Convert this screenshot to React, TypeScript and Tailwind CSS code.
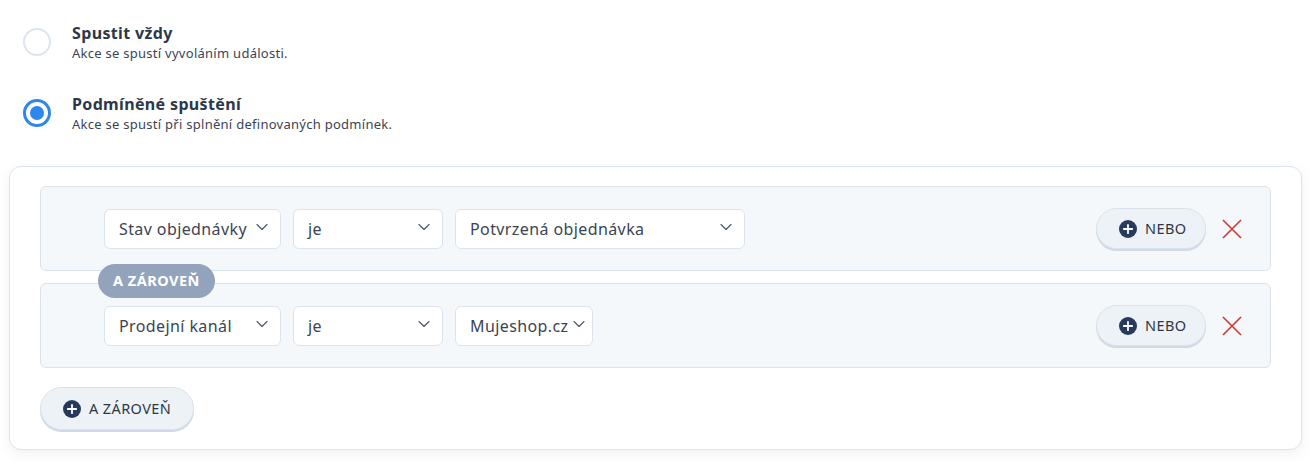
import {ChevronDown} from "lucide-react";

function PlusCircle() {
  return (
    <svg width="18" height="18" viewBox="0 0 18 18" className="shrink-0">
      <circle cx="9" cy="9" r="9" fill="#273a5b" />
      <path d="M9 4.8v8.4M4.8 9h8.4" stroke="#fff" strokeWidth="1.8" strokeLinecap="round" />
    </svg>
  );
}

function CloseIcon() {
  return (
    <svg width="20" height="20" viewBox="0 0 20 20" className="shrink-0">
      <path d="M1 1l18 18M19 1L1 19" stroke="#d2372f" strokeWidth="1.6" />
    </svg>
  );
}

function Select({label, width}: {label: string; width: string}) {
  return (
    <div className={`${width} h-10 flex items-center justify-between bg-white border border-[#dbe3ec] rounded-md pl-[14px] pr-[8px] text-[16px] tracking-[0.4px] text-[#3b4455]`}>
      <span className="whitespace-nowrap">{label}</span>
      <ChevronDown className="w-5 h-5 -mt-1 text-[#4a5568] shrink-0" strokeWidth={1.3} />
    </div>
  );
}

function PillButton({label, className}: {label: string; className: string}) {
  return (
    <button className={`flex items-center gap-2 rounded-full bg-[#edf2f7] border border-[#dae3ec] shadow-[0_2px_0_#cfdae6] text-[14.5px] tracking-[0.4px] text-[#2d3748] ${className}`}>
      <PlusCircle />
      <span>{label}</span>
    </button>
  );
}

function Row({fields}: {fields: {label: string; width: string}[]}) {
  return (
    <div className="h-[85px] bg-[#f5f8fb] border border-[#d9e3ec] rounded-md flex items-center pl-[63px] pr-[28px]">
      <div className="flex gap-3 items-center">
        {fields.map((f) => (
          <Select key={f.label + f.width} label={f.label} width={f.width} />
        ))}
      </div>
      <div className="ml-auto flex items-center gap-4">
        <PillButton label="NEBO" className="w-[110px] h-[41px] pl-[22px]" />
        <CloseIcon />
      </div>
    </div>
  );
}

function Radio({checked, title, desc}: {checked: boolean; title: string; desc: string}) {
  return (
    <div className="flex items-center gap-[21px]">
      {checked ? (
        <div className="w-7 h-7 rounded-full border-[3px] border-[#2f86eb] flex items-center justify-center">
          <div className="w-[14px] h-[14px] rounded-full bg-[#2f86eb]" />
        </div>
      ) : (
        <div className="w-7 h-7 rounded-full border-2 border-[#dde5ee] bg-white" />
      )}
      <div className="flex flex-col">
        <span className="text-[16px] tracking-[0.35px] font-bold text-[#2d3748] leading-[22px]">{title}</span>
        <span className="text-[13px] tracking-[0.27px] text-[#3b4455] leading-[18px]">{desc}</span>
      </div>
    </div>
  );
}

export default function App() {
  return (
    <div className="w-[1310px] h-[475px] bg-white overflow-hidden" style={{fontFamily: '"Noto Sans", "Lato", sans-serif'}}>
      <div className="pl-[23px] pt-[22px] flex flex-col gap-[31px]">
        <Radio checked={false} title="Spustit vždy" desc="Akce se spustí vyvoláním události." />
        <Radio checked={true} title="Podmíněné spuštění" desc="Akce se spustí při splnění definovaných podmínek." />
      </div>
      <div className="mt-[33px] ml-[9px] w-[1293px] h-[284px] bg-white border border-[#dbe4ee] rounded-xl shadow-[0_4px_14px_rgba(0,0,0,0.06)] px-[30px] pt-[19px]">
        <div className="flex flex-col gap-3 relative">
          <Row fields={[{label: "Stav objednávky", width: "w-[177px]"}, {label: "je", width: "w-[150px]"}, {label: "Potvrzená objednávka", width: "w-[290px]"}]} />
          <div className="absolute left-[58px] top-[78px] h-[34px] px-[15px] rounded-full bg-[#94a3bc] text-white text-[14.5px] tracking-[0.5px] font-bold flex items-center">
            A ZÁROVEŇ
          </div>
          <Row fields={[{label: "Prodejní kanál", width: "w-[177px]"}, {label: "je", width: "w-[150px]"}, {label: "Mujeshop.cz", width: "w-[138px]"}]} />
        </div>
        <PillButton label="A ZÁROVEŇ" className="mt-[19px] w-[154px] h-[43px] pl-[22px]" />
      </div>
    </div>
  );
}
